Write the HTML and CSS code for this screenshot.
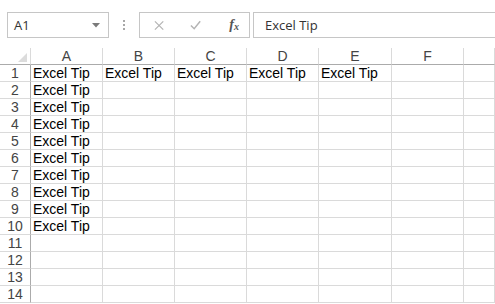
FILE: index.html
```html
<!DOCTYPE html>
<html lang="en">

<head>
    <meta charset="UTF-8">
    <meta name="viewport" content="width=device-width, initial-scale=1.0">
    <title>Excel Tip</title>
    <link rel="stylesheet" href="styles.css">
</head>

<body>
    <div class="bar">
        <div class="namebox">
            <span>A1</span>
            <svg class="arrow" width="8" height="5" viewBox="0 0 8 5"><path d="M0 0h8L4 4.5z" fill="#7a7a7a" /></svg>
        </div>
        <div class="dots"><i></i><i></i><i></i></div>
        <div class="fbtns">
            <svg width="11" height="11" viewBox="0 0 11 11"><path d="M1 1l9 9M10 1l-9 9" stroke="#b4b4b4" stroke-width="1.3" /></svg>
            <svg width="12" height="10" viewBox="0 0 12 10"><path d="M1 5.5l3.5 3.5L11 1" stroke="#b4b4b4" stroke-width="1.6" fill="none" /></svg>
            <span class="fx">f<sub>x</sub></span>
        </div>
        <div class="formula">Excel Tip</div>
    </div>

    <div class="sheet">
        <div class="corner"></div>
        <div class="colhead">A</div>
        <div class="colhead">B</div>
        <div class="colhead">C</div>
        <div class="colhead">D</div>
        <div class="colhead">E</div>
        <div class="colhead">F</div>
        <div class="colhead"></div>
    </div>
    <script>
        // build rows 1..14, row 1 filled A-E, col A filled to row 10
        const sheet = document.querySelector('.sheet');
        for (let r = 1; r <= 14; r++) {
            let rh = document.createElement('div');
            rh.className = 'rowhead';
            rh.textContent = r;
            sheet.appendChild(rh);
            for (let c = 0; c < 7; c++) {
                let cell = document.createElement('div');
                cell.className = 'cell';
                if ((r == 1 && c < 5) || (c == 0 && r <= 10)) {
                    cell.textContent = 'Excel Tip';
                }
                sheet.appendChild(cell);
            }
        }
    </script>
</body>

</html>
```

FILE: styles.css
```css
body {
    margin: 0;
    background: #fff;
    font-family: 'Open Sans', 'Liberation Sans', sans-serif;
    overflow: hidden;
}

.bar {
    display: flex;
    align-items: center;
    height: 26px;
    margin: 12px 0 0 7px;
}

.namebox {
    box-sizing: border-box;
    width: 102px;
    height: 26px;
    border: 1px solid #c6c6c6;
    display: flex;
    align-items: center;
    justify-content: space-between;
    padding: 0 8px 0 6px;
    font-size: 13px;
    color: #333;
}

.arrow {
    margin-top: 1px;
}

.dots {
    width: 30px;
    display: flex;
    flex-direction: column;
    align-items: center;
    gap: 2px;
}

.dots i {
    width: 2px;
    height: 2px;
    background: #a8a8a8;
}

.fbtns {
    box-sizing: border-box;
    width: 111px;
    height: 26px;
    border: 1px solid #c6c6c6;
    display: flex;
    align-items: center;
    padding: 0 10px 0 14px;
    gap: 26px;
}

.fx {
    font-family: 'Liberation Serif', serif;
    font-style: italic;
    font-weight: bold;
    font-size: 14px;
    color: #555;
    margin-left: 2px;
}

.fx sub {
    font-size: 10px;
    vertical-align: -1px;
}

.formula {
    box-sizing: border-box;
    flex: 1;
    height: 26px;
    margin-left: 3px;
    margin-right: -4px;
    border: 1px solid #c6c6c6;
    padding: 3px 0 0 11px;
    font-size: 13px;
    color: #333;
}

.sheet {
    margin-top: 10px;
    display: grid;
    grid-template-columns: 31px 72px 72px 72px 72px 73px 72px 1fr;
    grid-auto-rows: 17px;
    font-family: 'Liberation Sans', sans-serif;
    font-size: 14px;
}

.sheet div {
    box-sizing: border-box;
    border-right: 1px solid #dadada;
    border-bottom: 1px solid #dadada;
    line-height: 16px;
    white-space: nowrap;
}

.sheet .corner {
    position: relative;
    border-bottom-color: #ababab;
}

.corner::after {
    content: '';
    position: absolute;
    right: 3px;
    bottom: 2px;
    border-left: 9px solid transparent;
    border-bottom: 9px solid #dcdcdc;
}

.sheet .colhead {
    text-align: center;
    color: #444;
    border-bottom-color: #ababab;
}

.sheet .rowhead {
    text-align: center;
    color: #444;
    border-right-color: #ababab;
}

.sheet .cell {
    padding-left: 2px;
    color: #000;
}
```
